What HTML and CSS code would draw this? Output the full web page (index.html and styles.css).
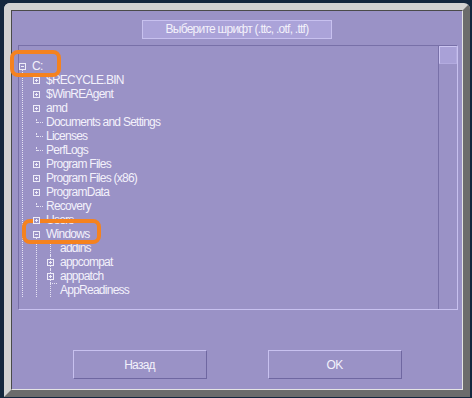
FILE: index.html
```html
<!DOCTYPE html>
<html lang="ru">
	<head>
		<meta charset="UTF-8">
		<title>Выберите шрифт</title>
		<link rel="stylesheet" href="styles.css">
	</head>
	<body>
		<div class="window">
			<div class="dialog">

				<div class="head">
					<div class="title">Выберите шрифт (.ttc, .otf, .ttf)</div>
				</div>

				<div class="browser">
					<div class="tree">
						<div class="row"><span class="twig"><i class="exp open"></i></span>C:</div>
						<div class="kids">
							<div class="row"><span class="twig"><i class="exp"></i></span>$RECYCLE.BIN</div>
							<div class="row"><span class="twig"><i class="exp"></i></span>$WinREAgent</div>
							<div class="row"><span class="twig"><i class="exp"></i></span>amd</div>
							<div class="row"><span class="twig leaf"></span>Documents and Settings</div>
							<div class="row"><span class="twig leaf"></span>Licenses</div>
							<div class="row"><span class="twig leaf"></span>PerfLogs</div>
							<div class="row"><span class="twig"><i class="exp"></i></span>Program Files</div>
							<div class="row"><span class="twig"><i class="exp"></i></span>Program Files (x86)</div>
							<div class="row"><span class="twig"><i class="exp"></i></span>ProgramData</div>
							<div class="row"><span class="twig leaf"></span>Recovery</div>
							<div class="row"><span class="twig"><i class="exp"></i></span>Users</div>
							<div class="row"><span class="twig"><i class="exp open"></i></span>Windows</div>
							<div class="kids kids-deep">
								<div class="row"><span class="twig leaf"></span>addins</div>
								<div class="row"><span class="twig"><i class="exp"></i></span>appcompat</div>
								<div class="row"><span class="twig"><i class="exp"></i></span>apppatch</div>
								<div class="row"><span class="twig leaf"></span>AppReadiness</div>
							</div>
						</div>
					</div>
					<div class="scroll">
						<div class="thumb"></div>
					</div>
				</div>

				<div class="buttons">
					<button>Назад</button>
					<button>OK</button>
				</div>

			</div>
		</div>

		<!-- выделения поверх дерева -->
		<div class="mark mark-c"></div>
		<div class="mark mark-win"></div>
	</body>
</html>
```

FILE: styles.css
```css
*{
	margin: 0;
	padding: 0;
}
body{
	background-color: #14273e;
	font-family: "Liberation Sans", Arial, sans-serif;
	font-size: 12px;
	letter-spacing: -0.75px;
	color: #f3f1fb;
}

.window{
	width: 466px;
	height: 394px;
	margin: 3px 0 0 4px;
	border: 7px solid;
	border-color: #d2d2d2 #6c6c6c #6c6c6c #d2d2d2;
	border-radius: 6px 6px 0 0;
	box-sizing: border-box;
}
.dialog{
	display: flex;
	flex-direction: column;
	height: 100%;
	border: 1px solid;
	border-color: #4a4a4a #e4e4e4 #e4e4e4 #4a4a4a;
	background-color: #9a92c6;
	box-sizing: border-box;
}

.head{
	display: flex;
	justify-content: center;
	padding-top: 9px;
}
.title{
	width: 190px;
	height: 19px;
	line-height: 17px;
	text-align: center;
	background-color: #aba3d9;
	border: 1px solid #c8c1ef;
	box-sizing: border-box;
}

.browser{
	display: flex;
	height: 265px;
	margin: 6px 4px 0 6px;
	border: 1px solid;
	border-color: #7870a8 #c8c1ef #c8c1ef #7870a8;
	box-sizing: border-box;
}
.tree{
	flex: 1;
	padding-top: 13px;
	overflow: hidden;
}
.row{
	display: flex;
	height: 14px;
	line-height: 14px;
	white-space: nowrap;
}
.twig{
	position: relative;
	display: flex;
	align-items: center;
	width: 13px;
	flex-shrink: 0;
}
.exp{
	position: relative;
	z-index: 1;
	width: 7px;
	height: 7px;
	border: 1px solid #eeecf8;
	background-color: #9a92c6;
	box-sizing: border-box;
}
.exp::before{
	content: "";
	position: absolute;
	left: 1px;
	top: 2px;
	width: 3px;
	height: 1px;
	background-color: #eeecf8;
}
.exp::after{
	content: "";
	position: absolute;
	left: 2px;
	top: 1px;
	width: 1px;
	height: 3px;
	background-color: #eeecf8;
}
.exp.open::after{
	display: none;
}
.leaf::before{
	content: "";
	position: absolute;
	left: 4px;
	top: 7px;
	width: 6px;
	border-top: 1px dotted #e6e3f5;
}
.leaf::after{
	content: "";
	position: absolute;
	left: 3px;
	top: 4px;
	height: 4px;
	border-left: 1px dotted #e6e3f5;
}

.kids{
	margin: -3px 0 0 3px;
	padding: 3px 0 0 10px;
	border-left: 1px dotted #e6e3f5;
}
.kids-deep .twig::before{
	content: "";
	position: absolute;
	left: 3px;
	top: 0;
	bottom: 0;
	border-left: 1px dotted #e6e3f5;
}
.kids-deep .leaf::after{
	display: none;
}

.scroll{
	width: 19px;
	border-left: 1px solid #7870a8;
	box-sizing: border-box;
}
.thumb{
	height: 18px;
	background-color: #a9a1d7;
	border: 1px solid;
	border-color: #cdc6f2 #b3abdf #b3abdf #cdc6f2;
	box-sizing: border-box;
}

.buttons{
	display: flex;
	justify-content: center;
	gap: 61px;
	margin-top: 40px;
}
button{
	width: 134px;
	height: 29px;
	font-family: inherit;
	font-size: 12px;
	letter-spacing: -0.75px;
	color: #f3f1fb;
	background-color: transparent;
	border: 1px solid;
	border-color: #c8c1ef #6f67a1 #6f67a1 #c8c1ef;
	outline: none;
}

.mark{
	position: absolute;
	border: 4px solid #f5821f;
	border-radius: 8px;
	box-sizing: border-box;
}
.mark-c{
	left: 10px;
	top: 50px;
	width: 51px;
	height: 27px;
}
.mark-win{
	left: 22px;
	top: 219px;
	width: 79px;
	height: 25px;
}
```
